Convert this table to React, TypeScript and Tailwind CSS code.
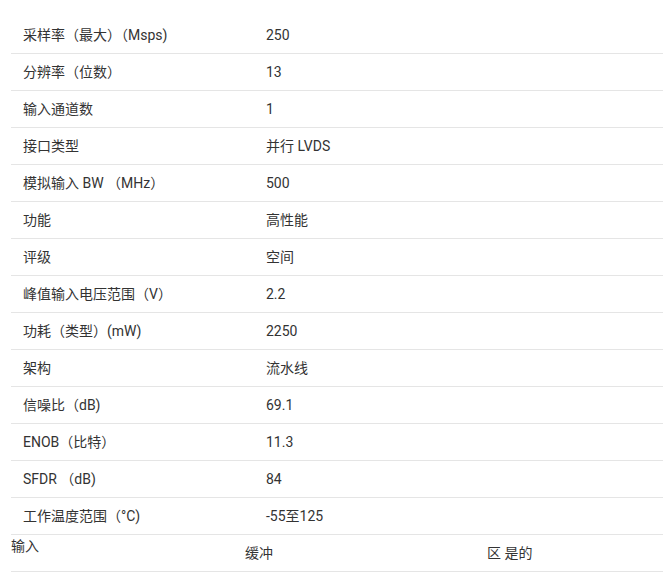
import React from "react";

const rows: [string, string][] = [
  ["采样率（最大）（Msps)", "250"],
  ["分辨率（位数）", "13"],
  ["输入通道数", "1"],
  ["接口类型", "并行 LVDS"],
  ["模拟输入 BW （MHz）", "500"],
  ["功能", "高性能"],
  ["评级", "空间"],
  ["峰值输入电压范围（V）", "2.2"],
  ["功耗（类型）(mW)", "2250"],
  ["架构", "流水线"],
  ["信噪比（dB)", "69.1"],
  ["ENOB（比特）", "11.3"],
  ["SFDR （dB)", "84"],
  ["工作温度范围（°C)", "-55至125"],
];

export default function App() {
  return (
    <div
      className="bg-white w-[663px] h-[572px] overflow-hidden pl-[11px] pt-[17px] text-[14px] text-[#333]"
      style={{ fontFamily: 'Roboto, "Noto Sans CJK SC", sans-serif' }}
    >
      <div className="flex flex-col">
        {rows.map(([k, v], i) => (
          <div key={i} className="flex h-[37px] items-center border-b border-[#e5e5e5]">
            <div className="w-[243px] pl-[12px]">{k}</div>
            <div className="pl-[12px]">{v}</div>
          </div>
        ))}
        <div className="flex h-[37px] border-b border-[#e5e5e5]">
          <div className="w-[234px] leading-[20px] pt-[1px]">输入</div>
          <div className="w-[242px] self-center">缓冲</div>
          <div className="self-center">区 是的</div>
        </div>
      </div>
    </div>
  );
}
